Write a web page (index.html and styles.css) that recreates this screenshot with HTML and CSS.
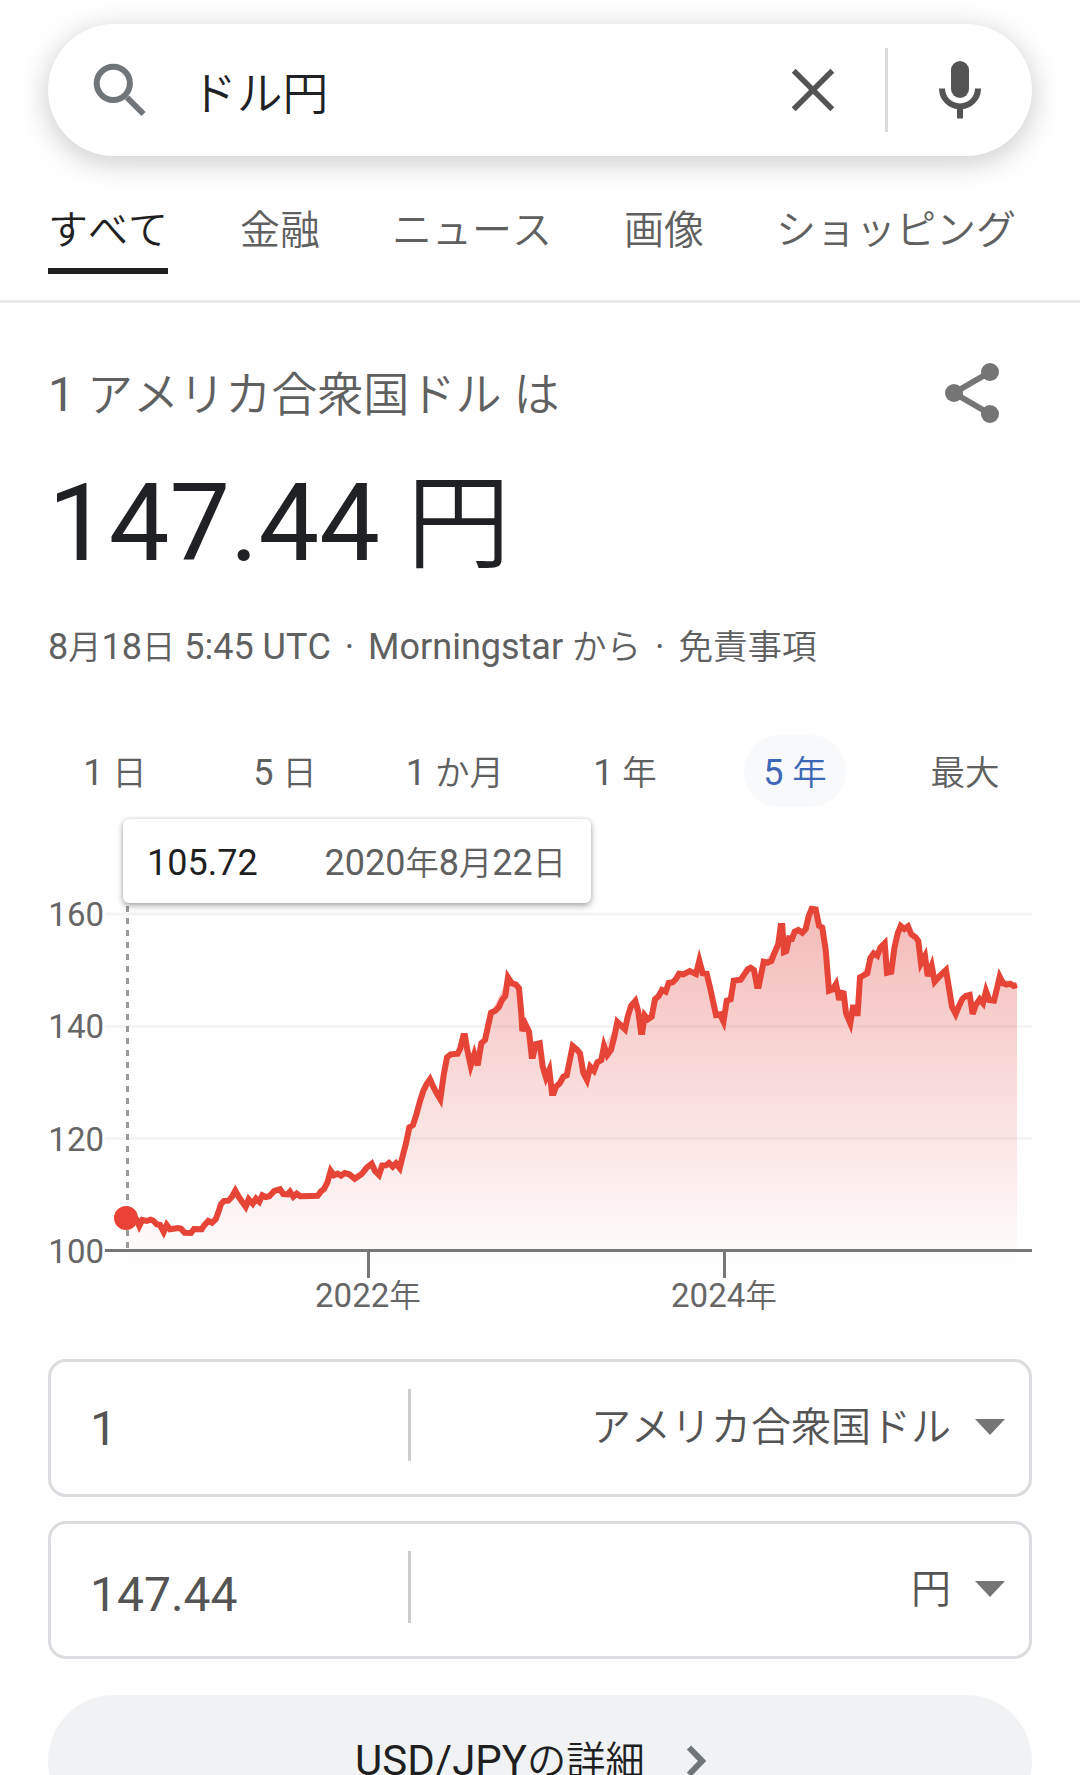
FILE: index.html
```html
<!DOCTYPE html>
<html lang="ja">
	<head>
		<meta charset="utf-8">
		<title>ドル円</title>
		<link rel="stylesheet" href="styles.css">
	</head>
	<body>
		<div class="searchbox">
			<svg class="search_icon" width="54" height="54" viewBox="0 0 54 54">
				<circle cx="20.3" cy="20.3" r="16.6"/>
				<path d="M34 34.5L50.5 51"/>
			</svg>
			<div class="query">ドル円</div>
			<svg class="clear_icon" width="44" height="44" viewBox="0 0 44 44">
				<path d="M2.7 2.7L41.3 41.3M41.3 2.7L2.7 41.3"/>
			</svg>
			<div class="search_divider"></div>
			<svg class="mic_icon" width="42" height="58" viewBox="0 0 42 58">
				<rect x="12" y="0" width="18" height="37" rx="9"/>
				<path d="M3 27.500a18 18 0 0 0 36 0M21 45v12.500"/>
			</svg>
		</div>

		<div class="tabs">
			<div class="tab selected">すべて</div>
			<div class="tab">金融</div>
			<div class="tab">ニュース</div>
			<div class="tab">画像</div>
			<div class="tab">ショッピング</div>
		</div>

		<div class="rate">
			<div class="rate_head">
				<div class="rate_title">1 <span class="ja">アメリカ合衆国ドル</span> <span class="ja">は</span></div>
				<svg class="share_icon" width="54" height="60" viewBox="0 0 54 60">
					<path d="M45 9L9 30L45 51"/>
					<circle cx="45" cy="9" r="9"/>
					<circle cx="9" cy="30" r="9"/>
					<circle cx="45" cy="51" r="9"/>
				</svg>
			</div>
			<div class="rate_value">147.44 <span class="ja">円</span></div>
			<div class="rate_meta"><span class="date">8<span class="ja">月</span>18<span class="ja">日</span></span> 5:45 UTC <span class="sep">·</span> Morningstar <span class="ja">から</span> <span class="sep">·</span> <span class="ja">免責事項</span></div>
		</div>

		<div class="ranges">
			<div class="range"><span>1 <span class="ja">日</span></span></div>
			<div class="range"><span>5 <span class="ja">日</span></span></div>
			<div class="range"><span>1 <span class="ja">か月</span></span></div>
			<div class="range"><span>1 <span class="ja">年</span></span></div>
			<div class="range selected"><span>5 <span class="ja">年</span></span></div>
			<div class="range"><span><span class="ja">最大</span></span></div>
		</div>

		<div class="chart">
			<svg class="plot" width="1080" height="430" viewBox="0 0 1080 430">
				<defs>
					<linearGradient id="fade" gradientUnits="userSpaceOnUse" x1="0" y1="6" x2="0" y2="365">
						<stop offset="0" stop-color="#e34a42" stop-opacity=".38"/>
						<stop offset="1" stop-color="#e34a42" stop-opacity="0"/>
					</linearGradient>
					<path id="line" d="M126 318L136.700 320L139.300 326L142.300 320L146.700 321L150.700 319.700L153.300 320.700L156.700 324.300L160 325L163.700 332L166.700 325L170 329.300L178.300 328L181 328.700L184.700 332.700L191 333L194 329L201.700 329.300L204 325.700L208.300 321L212 322.700L215.700 319.300L218 313.300L221 304L224 301L228.300 300.700L232 296.700L235.300 290.700L239 297.300L245.700 306.700L248.700 299.300L252.700 303.700L256 298.700L259.300 301.700L262.300 295.300L265.700 297L269.300 296.300L274.300 291L280 289.300L283.300 294L287.700 294.300L290 291.700L293.300 296.700L296.700 293.700L300.300 296.300L310.700 296L317.700 295.700L320.700 291.700L324 289L327.300 282.700L330.700 270.700L334 275.300L337.700 273.700L341 275.700L344.700 273L349.300 274.300L354.700 278.700L361.700 274L366.700 267.700L371.700 263.700L375 271L379 275L382.200 265.500L386 265.300L389 263L392.700 266.700L396 263.300L399.700 268L402.700 256L406 243.300L409.300 227.300L413 225L416.700 213.300L420 201L423.300 191L426.700 184L430 179.300L433.300 186.700L436.700 193.300L440.300 199.300L443.700 175L447 157.300L450.700 154.300L457.700 153.700L460.300 148.300L463.300 136L465 136L467.300 150L470.700 165.700L474.300 154L477.700 165.300L481.300 143.300L485 140L488.300 125L491 112.700L495.300 110.700L499 106.700L502 100L505.300 96L508 77.300L512 83.300L515.700 84.300L519 88.300L521.300 113.300L522.300 131L525.300 124L529 131.700L531.700 156L533 156L535.700 144.300L539.700 143.300L542.700 166.700L546 177.700L549.300 170L552 193L553.700 193L556 186.700L559.700 183.300L563.300 176.700L566.700 175.300L572.700 146L576.700 149.300L580 153.300L583.300 172.700L587 180L590.300 166.700L594 170.700L597.300 162.300L601.300 160L604 146L607.300 155L611 150L614.700 135L617.300 122L625 129.300L627.700 116.700L631 106L635.300 101L638.300 111.700L641 132L642.300 132L644.700 115.300L648 119.300L651.700 116.700L655 99.300L658.700 96L662 90L665.700 91.700L668.700 83L672.700 82.300L676 79L679 73.700L683.300 74.300L689.700 71L696 74L699.300 60.700L702.700 73.300L706.700 73.700L710 87.300L716 115L720 114.300L723.500 121.700L726.700 100.700L730.700 99.300L733.700 80.700L740.700 79.700L744.300 74.300L747.700 69.300L750.700 67.700L754 70L757 86L758.700 86L763.700 61.700L767.700 62.700L771.300 61L775 51.700L778.300 44L780.700 26L782.300 26L784 52L786.300 51L789 38.300L792 38.700L794.700 31.700L798.300 30L802.300 32.700L805.700 29L808.700 16L811.700 8.700L815.700 9.300L819 25.700L822.300 27.700L825.700 50L829 90.700L832.700 89.300L836 84L839.300 100L841.300 92.700L843.700 93.300L846 113.300L850.300 123.300L853.300 105L854.700 113.300L857.700 113.300L860 77.300L867.300 73.300L870.300 58.300L873.700 53.300L877.300 55.700L880.300 47.700L884.700 43.300L887 72.700L891.300 71.700L894.300 48.300L897.700 33.300L900.700 26L904.300 29L908 26.300L911.300 34.300L915.700 37.300L918.300 41L921 63.300L925 56L927.700 76L931.700 65.700L934.700 81.700L940 75.700L946 70L949.300 90L952 106.700L955.700 114L959 106L962.300 99L965.700 96L969.700 95L972.700 114L975.700 105L979.700 99.300L983 103.300L986 91L989.300 100L994 100.700L997 88.300L999.700 76.700L1003 83.300L1006.700 84.700L1010.300 83.700L1013.700 86L1017 85"/>
					<clipPath id="under">
						<path d="M126 318L139 326L160 325L184 333L201 329L215 319L224 301L235 291L246 306L262 296L280 290L300 296L318 296L331 271L355 278L372 264L400 268L409 227L430 180L440 199L447 157L458 154L464 136L471 165L478 165L491 113L508 78L519 88L522 131L529 132L533 156L540 144L546 177L553 193L567 175L573 146L580 153L587 180L604 147L617 123L625 129L635 101L642 132L655 99L669 83L679 74L706 74L716 115L723 121L734 81L751 68L758 86L764 62L778 44L782 27L786 51L795 32L806 29L813 9L822 28L829 90L836 85L850 123L857 113L860 77L870 58L884 44L888 72L898 33L908 27L918 41L925 57L935 81L946 70L955 113L970 95L973 113L986 92L994 100L1000 77L1017 85V365H126z"/>
					</clipPath>
				</defs>
				<path class="grid" d="M105 14h927M105 126.500h927M105 238.500h927"/>
				<rect class="area" x="126" y="0" width="891" height="365" clip-path="url(#under)"/>
				<path class="axis" d="M105 350.500h927M368.500 352v26M724.500 352v26"/>
				<path class="cursor" d="M127.500 6v342"/>
				<use class="line" href="#line"/>
				<circle class="dot" cx="126" cy="318" r="12"/>
				<g class="y_labels">
					<text x="104" y="26">160</text>
					<text x="104" y="138">140</text>
					<text x="104" y="251">120</text>
					<text x="104" y="363">100</text>
				</g>
				<g class="x_labels">
					<text x="368" y="407">2022<tspan class="ja">年</tspan></text>
					<text x="724" y="407">2024<tspan class="ja">年</tspan></text>
				</g>
			</svg>
			<div class="tooltip">
				<span class="tooltip_value">105.72</span>
				<span class="date">2020<span class="ja">年</span>8<span class="ja">月</span>22<span class="ja">日</span></span>
			</div>
		</div>

		<div class="converter">
			<div class="field">
				<div class="amount">1</div>
				<div class="currency">
					<span>アメリカ合衆国ドル</span>
					<svg class="arrow" width="30" height="16" viewBox="0 0 30 16"><path d="M0 0h30L15 16z"/></svg>
				</div>
			</div>
			<div class="field">
				<div class="amount result">147.44</div>
				<div class="currency">
					<span>円</span>
					<svg class="arrow" width="30" height="16" viewBox="0 0 30 16"><path d="M0 0h30L15 16z"/></svg>
				</div>
			</div>
		</div>

		<div class="more">
			<span>USD/JPY<span class="ja">の詳細</span></span>
			<svg class="chevron" width="20" height="32" viewBox="0 0 20 32"><path d="M3 2.500L16 16L3 29.500"/></svg>
		</div>
	</body>
</html>
```

FILE: styles.css
```css
* {
	box-sizing: border-box;
}
body {
	margin: 0;
	height: 1775px;
	overflow: hidden;
	background: #fefefe;
	color: #5f6060;
	font-family: Roboto, "Noto Sans CJK JP", sans-serif;
	font-kerning: none;
}
svg {
	display: block;
	flex: none;
}
.ja {
	font-family: "Noto Sans CJK JP", sans-serif;
	font-size: .96em;
	font-weight: 350;
	line-height: 0;
}
.date .ja {
	font-size: .925em;
}

/* search box */
.searchbox {
	display: flex;
	align-items: center;
	height: 132px;
	margin: 24px 48px 0;
	padding: 0 51px 0 45px;
	border-radius: 66px;
	background: #fff;
	box-shadow: 0 6px 24px 3px rgba(64, 60, 67, .22);
}
.search_icon {
	fill: none;
	stroke: #70757a;
	stroke-width: 6;
}
.query {
	flex: 1;
	margin-left: 44px;
	color: #202124;
	font-family: "Noto Sans CJK JP", sans-serif;
	font-size: 45.8px;
	font-weight: 350;
	line-height: 60px;
}
.clear_icon {
	fill: none;
	stroke: #545454;
	stroke-width: 5.5;
}
.search_divider {
	width: 3px;
	height: 84px;
	margin: 0 51px 0 50px;
	background: #dadada;
}
.mic_icon rect {
	fill: #545454;
}
.mic_icon path {
	fill: none;
	stroke: #545454;
	stroke-width: 6;
}

/* tabs */
.tabs {
	display: flex;
	gap: 72px;
	height: 147px;
	padding: 41px 48px 0;
	border-bottom: 3px solid #ebeded;
}
.tab {
	height: 77px;
	font-family: "Noto Sans CJK JP", sans-serif;
	font-size: 40px;
	font-weight: 350;
	line-height: 60px;
	white-space: nowrap;
}
.tab.selected {
	border-bottom: 6px solid #1f1f1f;
	color: #1f1f1f;
}

/* rate */
.rate {
	padding: 60px 48px 0;
}
.rate_head {
	display: flex;
	justify-content: space-between;
	height: 100px;
	padding-right: 33px;
}
.rate_title {
	padding-top: 2px;
	font-size: 48px;
	line-height: 60px;
}
.share_icon {
	fill: #757575;
}
.share_icon path {
	fill: none;
	stroke: #757575;
	stroke-width: 6;
}
.rate_value {
	height: 160px;
	color: #202124;
	font-size: 108px;
	line-height: 120px;
}
.rate_meta {
	font-size: 36px;
	line-height: 48px;
}
.sep {
	margin: 0 5px;
}

/* ranges */
.ranges {
	display: flex;
	margin: 64px 30px 0;
}
.range {
	display: flex;
	flex: 1;
	justify-content: center;
	font-size: 36px;
}
.range > span {
	height: 72px;
	padding: 0 19.5px;
	border-radius: 36px;
	line-height: 77px;
}
.range.selected > span {
	background: #f8f9fb;
	color: #3e68b7;
}

/* chart */
.chart {
	position: relative;
	margin-top: 93px;
}
.plot {
	overflow: visible;
}
.grid {
	fill: none;
	stroke: #f4f4f4;
	stroke-width: 3;
}
.area {
	fill: url(#fade);
}
.axis {
	fill: none;
	stroke: #757779;
	stroke-width: 3;
}
.cursor {
	stroke: #999;
	stroke-width: 3;
	stroke-dasharray: 6;
}
.line {
	fill: none;
	stroke: #e64436;
	stroke-width: 6;
}
.dot {
	fill: #ea4335;
}
.y_labels,
.x_labels {
	fill: #666;
	font-size: 33px;
}
.y_labels {
	text-anchor: end;
}
.x_labels {
	text-anchor: middle;
}
.tooltip {
	position: absolute;
	left: 123px;
	top: -81px;
	display: flex;
	justify-content: space-between;
	width: 468px;
	height: 84px;
	padding: 0 25px 0 24px;
	border-radius: 6px;
	background: #fff;
	box-shadow: 0 3px 6px rgba(0, 0, 0, .3), 0 0 4px rgba(0, 0, 0, .12);
	font-size: 36px;
	line-height: 88px;
}
.tooltip_value {
	color: #1f1f1f;
}

/* converter */
.converter {
	display: grid;
	gap: 24px;
	margin: 29px 48px 36px;
}
.field {
	display: flex;
	height: 138px;
	padding: 27px 24px 0 39px;
	border: 3px solid #dadce0;
	border-radius: 18px;
	color: #545454;
}
.amount {
	width: 321px;
	height: 72px;
	border-right: 3px solid #ccc;
	font-size: 48px;
	line-height: 80px;
}
.amount.result {
	line-height: 88px;
}
.currency {
	display: flex;
	flex: 1;
	align-items: center;
	justify-content: flex-end;
	gap: 24px;
	height: 75px;
	font-family: "Noto Sans CJK JP", sans-serif;
	font-size: 40px;
	font-weight: 350;
}
.currency span {
	height: 75px;
	line-height: 71px;
}
.arrow {
	fill: #757575;
}

/* more button */
.more {
	display: flex;
	align-items: center;
	justify-content: center;
	gap: 41px;
	height: 132px;
	margin: 0 48px;
	padding-right: 19px;
	border-radius: 66px;
	background: #f0f2f4;
	color: #1f1f1f;
	font-size: 42px;
	line-height: 62px;
}
.more .ja {
	font-size: .935em;
}
.chevron {
	fill: none;
	stroke: #70757a;
	stroke-width: 6;
}
```
